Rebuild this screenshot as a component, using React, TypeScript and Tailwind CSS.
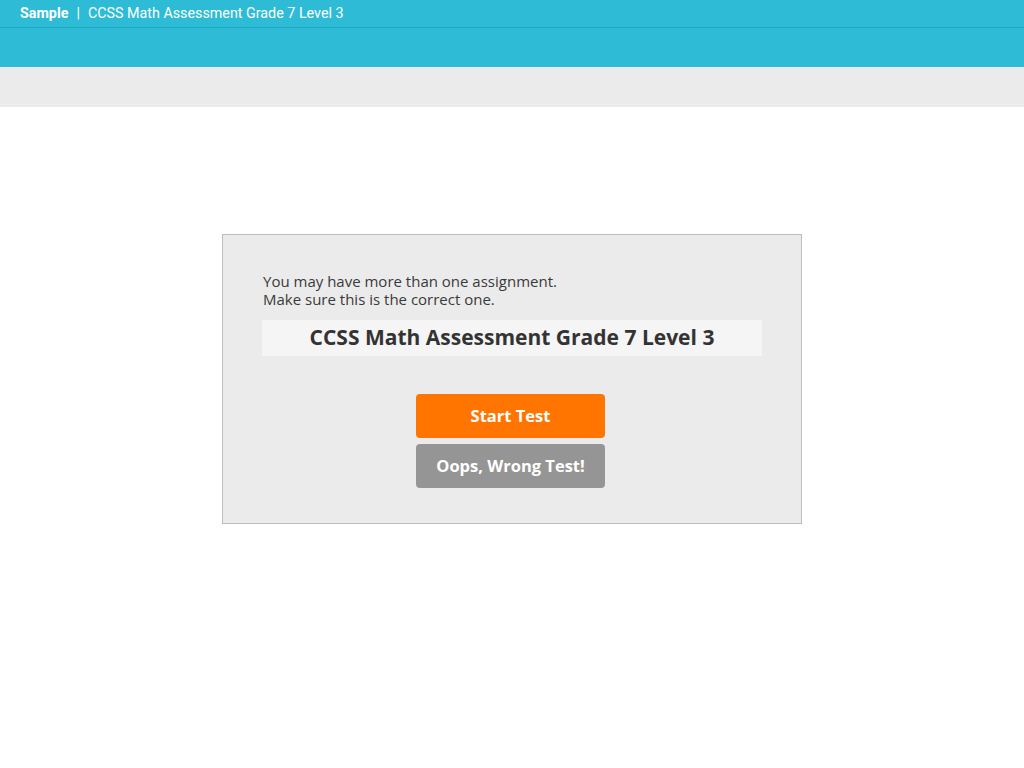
import React from 'react';

const App: React.FC = () => {
    return (
        <div className="min-h-screen w-full bg-white" style={{ fontFamily: '"Open Sans", sans-serif' }}>
            <header className="bg-[#2ebbd6]">
                <div className="flex items-center h-[28px] px-5 pt-px border-b border-[#1ba8c3] text-white text-[14.3px] font-['Roboto',sans-serif]">
                    <span className="font-bold">Sample</span>
                    <span className="mx-[8px]">|</span>
                    <span>CCSS Math Assessment Grade 7 Level 3</span>
                </div>
                <div className="h-[39px]" />
            </header>
            <div className="h-[40px] bg-[#ebebeb]" />

            <main className="flex justify-center pt-[127px]">
                <div className="w-[580px] h-[290px] bg-[#ebebeb] border border-[#bcbcbc] pt-[37px] px-[39px]">
                    <p className="text-[15px] leading-[18px] text-[#3a3a3a] pl-px">
                        You may have more than one assignment.
                        <br />
                        Make sure this is the correct one.
                    </p>
                    <div className="mt-[12px] h-[36px] w-[500px] bg-[#f5f5f5] flex items-center justify-center text-[21px] font-bold text-[#333]">
                        CCSS Math Assessment Grade 7 Level 3
                    </div>
                    <div className="mt-[38px] flex flex-col items-center gap-[6px] pr-[3px]">
                        <button className="w-[189px] h-[44px] rounded-[4px] bg-[#ff7500] text-white font-bold text-[16.5px]">
                            Start Test
                        </button>
                        <button className="w-[189px] h-[44px] rounded-[4px] bg-[#959595] text-white font-bold text-[16.5px]">
                            Oops, Wrong Test!
                        </button>
                    </div>
                </div>
            </main>
        </div>
    );
};

export default App;
